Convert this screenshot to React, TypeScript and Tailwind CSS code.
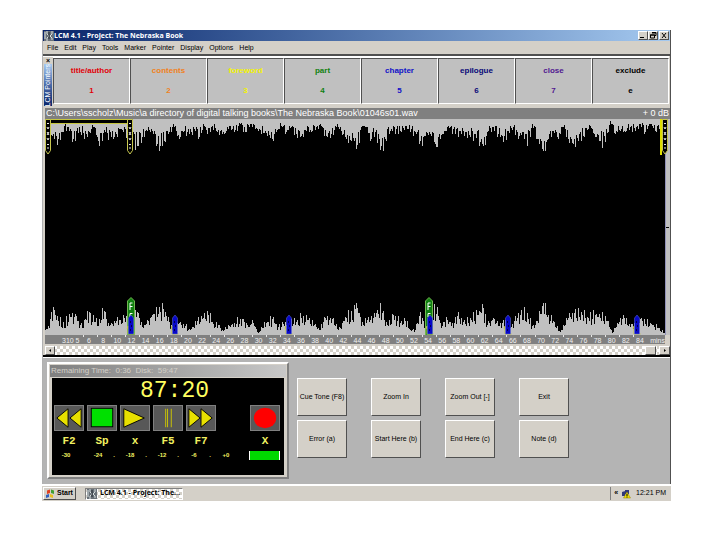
import React from "react";

interface Marker {
  left: number;
}

const menuItems = ["File", "Edit", "Play", "Tools", "Marker", "Pointer", "Display", "Options", "Help"];

const pointers = [
  { label: "title/author", hotkey: "1", color: "text-[#e00008]" },
  { label: "contents", hotkey: "2", color: "text-[#f08020]" },
  { label: "foreword", hotkey: "3", color: "text-[#f4f400]" },
  { label: "part", hotkey: "4", color: "text-[#108010]" },
  { label: "chapter", hotkey: "5", color: "text-[#1010c8]" },
  { label: "epilogue", hotkey: "6", color: "text-[#080878]" },
  { label: "close", hotkey: "7", color: "text-[#501890]" },
  { label: "exclude", hotkey: "e", color: "text-black" },
];

const actions = [
  "Cue Tone (F8)", "Zoom In", "Zoom Out [-]", "Exit",
  "Error (a)", "Start Here (b)", "End Here (c)", "Note (d)",
];

// envelope points, [position, depth]
const topEnvelope = [
  [0, 8], [7, 17], [13, 20], [17, 13], [22, 8], [28, 20], [35, 13], [42, 18], [48, 8], [53, 22],
  [60, 13], [68, 20], [75, 10], [84, 16], [92, 27], [97, 18], [102, 12], [107, 12], [112, 25], [115, 27],
  [119, 22], [124, 13], [129, 8], [134, 20], [139, 12], [144, 15], [149, 10], [154, 18], [159, 7], [162, 15],
  [167, 7], [172, 13], [179, 15], [184, 7], [189, 13], [195, 5], [200, 13], [205, 5], [212, 10], [222, 17],
  [227, 20], [231, 13], [236, 7], [241, 13], [246, 8], [251, 15], [256, 17], [261, 12], [266, 13], [271, 8],
  [276, 7], [281, 17], [286, 15], [291, 8], [296, 12], [301, 20], [306, 22], [310, 20], [313, 26], [318, 7],
  [323, 8], [326, 22], [331, 13], [336, 31], [341, 20], [346, 12], [356, 12], [361, 7], [366, 13], [371, 13],
  [376, 22], [381, 17], [386, 15], [392, 28], [396, 20], [401, 12], [406, 8], [411, 15], [421, 13], [426, 18],
  [431, 15], [436, 23], [439, 27], [444, 12], [449, 8], [454, 15], [459, 23], [464, 12], [469, 8], [474, 20],
  [479, 13], [483, 27], [488, 5], [493, 20], [499, 32], [504, 20], [509, 12], [514, 20], [519, 8], [524, 20],
  [529, 25], [534, 22], [539, 17], [546, 7], [551, 18], [556, 22], [561, 23], [566, 2], [571, 15], [576, 12],
  [581, 13], [586, 8], [591, 12], [596, 5], [601, 13], [606, 5], [611, 12], [621, 8],
];

const bottomEnvelope = [
  [0, 5], [3, 9], [8, 28], [13, 14], [18, 13], [25, 18], [30, 21], [35, 10], [40, 16], [44, 23],
  [49, 13], [54, 16], [59, 24], [64, 9], [69, 14], [74, 15], [79, 17], [86, 15], [92, 23], [97, 8],
  [102, 15], [107, 20], [114, 28], [118, 26], [124, 13], [127, 5], [135, 13], [140, 9], [145, 5], [152, 14],
  [158, 17], [163, 20], [168, 11], [173, 10], [177, 5], [184, 9], [189, 12], [197, 16], [204, 8], [207, 15],
  [213, 2], [221, 12], [227, 16], [233, 8], [240, 13], [251, 13], [256, 17], [263, 15], [269, 10], [274, 5],
  [279, 18], [288, 17], [293, 5], [298, 14], [306, 24], [313, 27], [318, 13], [323, 15], [329, 17], [336, 32],
  [340, 15], [344, 9], [349, 20], [356, 12], [361, 14], [366, 5], [371, 5], [376, 23], [381, 10], [387, 20],
  [393, 28], [396, 12], [403, 15], [408, 12], [413, 19], [419, 13], [426, 17], [433, 20], [439, 27], [443, 10],
  [449, 17], [454, 9], [461, 15], [467, 8], [471, 19], [476, 20], [483, 22], [488, 9], [493, 14], [499, 32],
  [503, 18], [509, 14], [516, 3], [524, 17], [531, 26], [538, 20], [544, 17], [551, 20], [558, 23], [563, 14],
  [568, 2], [573, 12], [579, 20], [584, 9], [597, 17], [606, 12], [614, 7], [621, 2],
];

const greenMarkers: Marker[] = [{ left: 13.8 }, { left: 61.9 }];
const blueMarkers: Marker[] = [
  { left: 13.9 }, { left: 21 }, { left: 39.3 }, { left: 62.1 }, { left: 74.7 }, { left: 95.5 },
];

const minutes = Array.from({ length: 40 }, (_, i) => 6 + i * 2);

const noise = (n: number) => {
  const v = Math.sin(n * 127.1) * 43758.5453;
  return v - Math.floor(v);
};

// one column for each sample, joined in a single path
const columns = (points: number[][], fromTop: boolean, seed: number) => {
  let d = "";
  let k = 0;
  for (let x = 0; x < 621; x++) {
    while (k < points.length - 2 && points[k + 1][0] <= x) k++;
    const [x0, y0] = points[k];
    const [x1, y1] = points[k + 1];
    const env = y0 + ((y1 - y0) * (x - x0)) / (x1 - x0);
    const spread = x % 3 === 0 ? 0.95 + 0.4 * noise(x + seed) : 0.5 + 0.5 * noise(x + seed);
    const h = Math.max(1, Math.round(x === x0 ? y0 : Math.min(env * spread, 32)));
    d += fromTop ? `M${x} 0h1v${h}h-1z` : `M${x} 216h1v-${h}h-1z`;
  }
  return d;
};

const topPath = columns(topEnvelope, true, 3);
const bottomPath = columns(bottomEnvelope, false, 900);

const raised = "border border-t-white border-l-white border-r-[#505050] border-b-[#505050]";
const checker =
  "bg-[conic-gradient(#fff_25%,#d4d0c8_0_50%,#fff_0_75%,#d4d0c8_0)] bg-[length:6px_6px]";

const AppIcon = () => (
  <svg className="h-[10px] w-[10px] shrink-0" viewBox="0 0 10 10" aria-hidden="true">
    <rect width="10" height="10" fill="#687078" />
    <path d="M1 1v7M3 0v3l2 2-2 2v3M8 0v3L6 5l2 2v2" stroke="#d8e0e0" fill="none" />
    <path d="M5 1v7" stroke="#202830" />
  </svg>
);

const TitleBar = () => (
  <header className="flex h-[11px] items-center bg-linear-to-r from-[#0a246a] to-[#a6caf0] pr-px pl-px">
    <AppIcon />
    <h1 className="flex-1 font-['Open_Sans','Liberation_Sans',sans-serif] text-[7px] leading-[11px] font-bold whitespace-pre text-white">
      LCM 4.1 - Project: The Nebraska Book
    </h1>
    <button aria-label="Minimize" className={`flex h-[9px] w-[10px] items-center justify-center bg-[#d4d0c8] ${raised}`}>
      <svg width="8" height="7" viewBox="0 0 8 7"><path d="M1 5.5h4" stroke="#000" /></svg>
    </button>
    <button aria-label="Restore" className={`flex h-[9px] w-[10px] items-center justify-center bg-[#d4d0c8] ${raised}`}>
      <svg width="8" height="7" viewBox="0 0 8 7">
        <path d="M3 .5h4v3H5M1.5 3h4v3h-4z" stroke="#000" fill="none" />
        <path d="M3 1h4M1 3h5" stroke="#000" />
      </svg>
    </button>
    <button aria-label="Close" className={`ml-px flex h-[9px] w-[10px] items-center justify-center bg-[#d4d0c8] ${raised}`}>
      <svg width="8" height="7" viewBox="0 0 8 7"><path d="M2 1l4 5M6 1L2 6" stroke="#000" /></svg>
    </button>
  </header>
);

const MenuBar = () => (
  <nav className="flex h-[13px] gap-[6px] pl-[4px] text-[7px] leading-[13px] text-black">
    {menuItems.map((item) => (
      <button key={item}>{item}</button>
    ))}
  </nav>
);

const PointerBar = () => (
  <section className="flex h-[50px] border-t-2 border-[#505050] pr-px">
    <div className="flex w-[10px] flex-col items-center border-t border-white">
      <span className="h-[7px] text-[7px] leading-[7px] font-bold">×</span>
      <div className="flex w-[8px] flex-1 items-center justify-center bg-linear-to-b from-[#a6caf0] via-[#4a6aa8] to-[#0a246a]">
        <span className="rotate-180 text-[7px] leading-[8px] whitespace-nowrap text-white [writing-mode:vertical-rl]">
          LCM Pointers
        </span>
      </div>
    </div>
    <div className="grid flex-1 grid-cols-8 border-t-2 border-white">
      {pointers.map((p) => (
        <button
          key={p.label}
          className={`flex flex-col items-center gap-[10px] border border-t-[#505050] border-r-white border-b-white border-l-[#505050] bg-[#c0c0c0] pt-[7px] text-[8px] leading-[10px] font-bold ${p.color}`}>
          <span>{p.label}</span>
          <span>{p.hotkey}</span>
        </button>
      ))}
    </div>
  </section>
);

const EdgeMarker = () => (
  <svg className="h-[36px] w-[6px]" viewBox="0 0 6 36" aria-hidden="true">
    <path d="M.5 .5h5v31L3 35l-2.5-3.5z" fill="#000" stroke="#c8c850" />
    <path d="M2 4.500h2M2 8l1 2 1-2M2 13l2 3M4 13l-2 3M2 19l1 2 1-2M2 25.500h2M3 28v2" stroke="#e8e8e8" fill="none" />
  </svg>
);

const Waveform = () => (
  <div className="relative h-[216px] flex-1">
    <svg className="block h-full w-full" viewBox="0 0 621 216" preserveAspectRatio="none" shapeRendering="crispEdges">
      <rect width="621" height="216" fill="#000" />
      <path d={topPath} fill="#c0c0c0" />
      <path d={bottomPath} fill="#c0c0c0" />
      <rect width="88" height="5" fill="#000" />
      <path d="M0 .5h88M5 4.5h79" stroke="#c8c840" />
      <path d="M5.5 4v24M87.500 0v28" stroke="#909030" />
    </svg>
    <div className="absolute top-0 left-0 flex"><EdgeMarker /></div>
    <div className="absolute top-0 left-[13.3%] flex"><EdgeMarker /></div>
    <div className="absolute top-0 -right-[3px] flex border-l-2 border-[#e0e000]"><EdgeMarker /></div>
    {greenMarkers.map((m) => (
      <div key={m.left} className="absolute bottom-0 flex -translate-x-1/2" style={{ left: `${m.left}%` }}>
        <svg width="9" height="38" viewBox="0 0 9 38">
          <path d="M1 38V4l3.5-3.5L8 4v34z" fill="#108010" stroke="#70b850" />
          <path d="M3.500 13V6H6M3.500 9.500H6M6 16.500H3.500V20" stroke="#fff" fill="none" />
        </svg>
      </div>
    ))}
    {blueMarkers.map((m) => (
      <div key={m.left} className="absolute bottom-0 flex -translate-x-1/2" style={{ left: `${m.left}%` }}>
        <svg width="9" height="21" viewBox="0 0 9 21">
          <path d="M.5 15l1-3v8H8" stroke="#c0c040" fill="none" />
          <path d="M2 20V4l2.500-3L7 4v16z" fill="#0808c8" stroke="#6070d8" strokeWidth=".5" />
          <path d="M4 7v2M5 11v2M4 15v2" stroke="#000050" />
        </svg>
      </div>
    ))}
  </div>
);

const Ruler = () => (
  <div className="mr-[5px] flex bg-[#808080] text-[7px] leading-[7px] text-[#f0f0f0]">
    <span className="w-[37px] pt-[2px] pl-[17px] whitespace-nowrap">310 5</span>
    <div className="flex-1">
      <svg className="block h-[2px] w-full" viewBox="0 0 560 2" preserveAspectRatio="none" shapeRendering="crispEdges">
        {minutes.map((m, i) => (
          <path key={m} d={`M${i * 14 + 1} 0v2`} stroke="#e8e8e8" />
        ))}
      </svg>
      <div className="flex">
        {minutes.map((m) => (
          <span key={m} className="w-0 flex-1 text-center">{m}</span>
        ))}
      </div>
    </div>
    <span className="w-[18px] pt-[2px] text-right">mins</span>
  </div>
);

const ScrollBar = () => (
  <div className={`mt-[2px] flex h-[9px] justify-between ${checker}`}>
    <button aria-label="Scroll left" className={`flex w-[10px] items-center justify-center bg-[#d4d0c8] ${raised}`}>
      <svg width="4" height="5" viewBox="0 0 4 5"><path d="M1 2.5L3 1v3z" /></svg>
    </button>
    <div className="flex gap-[3px]">
      <div className={`w-[11px] bg-[#d4d0c8] ${raised}`} />
      <button aria-label="Scroll right" className={`flex w-[11px] items-center justify-center bg-[#d4d0c8] ${raised}`}>
        <svg width="4" height="5" viewBox="0 0 4 5"><path d="M3 2.5L1 1v3z" /></svg>
      </button>
    </div>
  </div>
);

const WavePanel = () => (
  <section className="mt-[4px] border-b-2 border-black pl-[2px]">
    <div className="flex h-[11px] justify-between bg-[#808080] px-px text-[9px] leading-[11px] whitespace-pre text-white">
      <span>C:\Users\sscholz\Music\a directory of digital talking books\The Nebraska Book\01046s01.wav</span>
      <span>+ 0 dB</span>
    </div>
    <div className="flex bg-[#c0c0c0]">
      <Waveform />
      <div className="flex w-[5px] flex-col justify-center border-l border-[#9090b8]">
        <span className="h-px w-[3px] bg-black" />
      </div>
    </div>
    <Ruler />
    <ScrollBar />
  </section>
);

const transport = [
  { name: "Rewind", hotkey: "F2", shape: <path d="M14 3v20L2 13zM28 3v20L16 13z" fill="#e8e000" stroke="#000" /> },
  { name: "Stop", hotkey: "Sp", shape: <rect x="3.5" y="2.5" width="23" height="20" fill="#00e000" stroke="#000" /> },
  { name: "Play", hotkey: "x", shape: <path d="M3 3v20l22-10z" fill="#e8e000" stroke="#000" /> },
  { name: "Pause", hotkey: "F5", shape: <path d="M12.5 3v20M14.5 3v20M18.5 3v20" stroke="#d0c800" /> },
  { name: "Forward", hotkey: "F7", shape: <path d="M2 3v20l12-10zM15 3v20l12-10z" fill="#e8e000" stroke="#000" /> },
];

const TransportButton = ({ name, hotkey, shape }: { name: string; hotkey: string; shape: React.ReactNode }) => (
  <button
    aria-label={name}
    className="flex w-[30px] flex-col items-center gap-[3px] font-['Liberation_Mono',monospace] text-[11px] leading-[14px] font-bold text-[#f0f060]">
    <svg
      className="h-[26px] w-[30px] border border-[#808080] bg-[#585858]"
      viewBox="0 0 30 26"
      preserveAspectRatio="none">
      {shape}
    </svg>
    <span>{hotkey}</span>
  </button>
);

const Player = () => (
  <div className="w-[242px] shrink-0 border-2 border-t-white border-r-[#808080] border-b-[#808080] border-l-white bg-[#d4d0c8] p-px">
    <div className="bg-linear-to-r from-[#808080] to-[#c8c8c8] pl-px text-[8px] leading-[12px] whitespace-pre text-[#d4d0c8]">
      Remaining Time:  0:36  Disk:  59:47
    </div>
    <div className="mx-[2px] mt-px mb-px h-[97px] bg-black px-[2px]">
      <output className="block pl-[86px] font-['Liberation_Mono',monospace] text-[23px] leading-[27px] text-[#ffff60]">
        87:20
      </output>
      <div className="flex gap-[3px]">
        {transport.map((t) => (
          <TransportButton key={t.name} {...t} />
        ))}
        <div className="ml-auto pr-[2px]">
          <TransportButton name="Record" hotkey="X" shape={<ellipse cx="15" cy="13" rx="12" ry="11" fill="#f00" />} />
        </div>
      </div>
      <div className="mt-[2px] flex items-center justify-between pr-[2px] pl-[4px] text-[6px] leading-[10px] font-bold text-[#f0f060]">
        <div className="flex">
          {["-30", "", "-24", ".", "-18", ".", "-12", ".", "-6", ".", "+0"].map((v, i) => (
            <span key={i} className="w-[16px] text-center">{v}</span>
          ))}
        </div>
        <span className="h-[9px] w-[31px] border-x border-white bg-[#00d800]" />
      </div>
    </div>
  </div>
);

const TaskBar = () => (
  <footer className="flex h-[17px] items-center border-t-2 border-white bg-[#d4d0c8] pl-px text-[7px]">
    <button className={`flex h-[13px] items-center gap-[2px] px-[2px] font-bold ${raised}`}>
      <svg width="9" height="9" viewBox="0 0 9 9" aria-hidden="true">
        <path d="M1 1.5l3-1v3.5l-3 1z" fill="#e04020" />
        <path d="M5 .5l3 1v3.5L5 4z" fill="#40a030" />
        <path d="M0 6l3-1v3L0 9z" fill="#3060c0" />
        <path d="M4 5l3 1v3L4 8z" fill="#e8c020" />
      </svg>
      Start
    </button>
    <button className={`ml-[9px] flex h-[12px] w-[98px] items-center gap-[3px] border border-t-[#808080] border-r-white border-b-white border-l-[#808080] pl-px font-bold whitespace-nowrap ${checker}`}>
      <AppIcon />
      <span className="font-['Open_Sans','Liberation_Sans',sans-serif]">LCM 4.1 - Project: The...</span>
    </button>
    <div className="ml-auto flex h-[13px] items-center gap-[3px] border-l border-[#808080] pr-[5px] pl-[3px]">
      <span className="font-bold">«</span>
      <svg width="10" height="10" viewBox="0 0 10 10" aria-hidden="true">
        <path d="M1 3l3-1v5H1zM4 1h4v4H4z" fill="#303878" />
        <path d="M6 3l3.500 6h-7z" fill="#f0e000" stroke="#908000" strokeWidth=".5" />
        <path d="M6 5v2M6 7.500v1" stroke="#000" />
      </svg>
      <span className="pl-[2px]">12:21 PM</span>
    </div>
  </footer>
);

const App: React.FC = () => {
  return (
    <div className="bg-white pt-[30px] pr-[49px] pl-[42px] font-['Liberation_Sans',sans-serif]">
      <main className="border-r border-l border-r-[#505050] border-l-[#b0b0b0] bg-[#d4d0c8]">
        <TitleBar />
        <MenuBar />
        <PointerBar />
        <WavePanel />
        <section className="flex items-start border-t border-white bg-[#b4b4b4] pt-[4px] pb-[5px] pl-[4px]">
          <Player />
          <div className="mt-[16px] ml-[8px] grid grid-cols-4 gap-x-[24px] gap-y-[4px]">
            {actions.map((a) => (
              <button
                key={a}
                className={`h-[38px] w-[50px] bg-[#d4d0c8] text-[7px] leading-[8px] whitespace-nowrap text-black ${raised}`}>
                {a}
              </button>
            ))}
          </div>
        </section>
      </main>
      <TaskBar />
    </div>
  );
};

export default App;
